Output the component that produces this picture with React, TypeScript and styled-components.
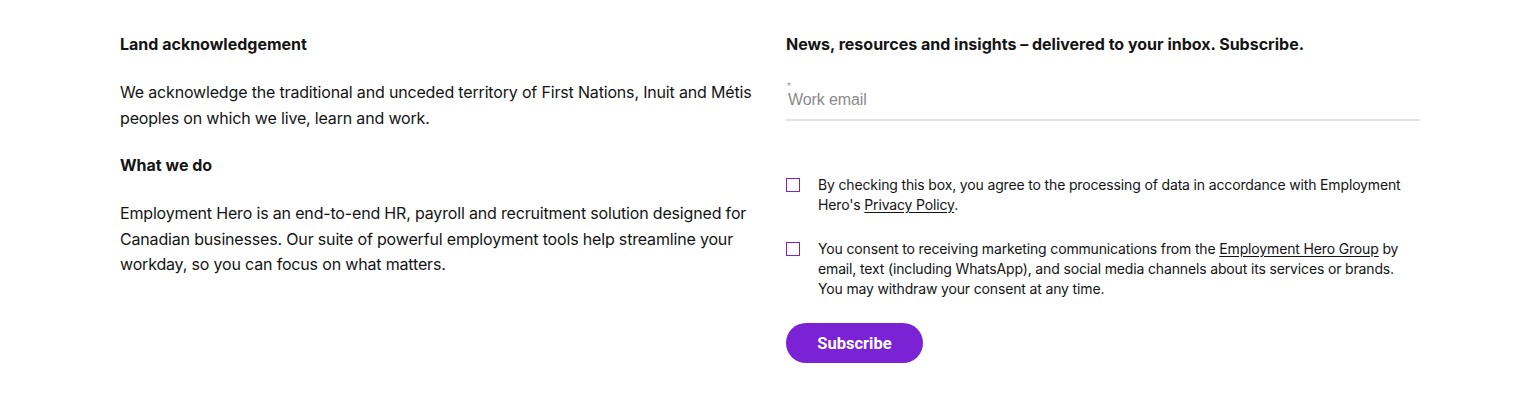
import React from 'react';
import styled, { createGlobalStyle } from 'styled-components';

const GlobalStyle = createGlobalStyle`
  body {
    margin: 0;
    background: #ffffff;
    font-family: 'Inter', 'Noto Sans', sans-serif;
    color: #141414;
  }
`;

const Footer = styled.footer`
  box-sizing: border-box;
  width: 1540px;
  height: 393px;
  padding: 34px 120px 0;
  display: grid;
  grid-template-columns: 1fr 1fr;
  column-gap: 32px;
`;

const Column = styled.div`
  display: flex;
  flex-direction: column;
`;

const Heading = styled.h4`
  margin: 0;
  font-size: 16px;
  line-height: 20px;
  font-weight: 700;
`;

const Paragraph = styled.p`
  margin: 26px 0 24px;
  font-size: 16px;
  line-height: 25.5px;
  letter-spacing: -0.17px;
`;

const EmailField = styled.label`
  position: relative;
  display: block;
  margin-top: 25px;
  border-bottom: 2px solid #e2e2e2;
  padding: 10px 0 9px 2px;
`;

const Required = styled.span`
  position: absolute;
  left: 1px;
  top: 3px;
  font-size: 10px;
  line-height: 10px;
  color: #9a9a9a;
  font-family: 'Liberation Sans', Arial, sans-serif;
`;

const EmailInput = styled.input`
  border: none;
  outline: none;
  padding: 0;
  width: 100%;
  font-family: 'Liberation Sans', Arial, sans-serif;
  font-size: 16px;
  letter-spacing: -0.1px;
  line-height: 20px;
  color: #141414;
  background: transparent;

  &::placeholder {
    color: #8a8a8a;
  }
`;

const ConsentRow = styled.label<{ $first?: boolean }>`
  display: flex;
  gap: 18px;
  margin-top: ${(p) => (p.$first ? '54px' : '24px')};
  font-size: 14px;
  line-height: 20px;
  letter-spacing: -0.15px;
  padding-right: 14px;

  a {
    color: inherit;
    text-decoration: underline;
    text-underline-offset: 2px;
  }
`;

const Box = styled.span`
  flex: 0 0 auto;
  box-sizing: border-box;
  width: 14px;
  height: 14px;
  margin-top: 3px;
  border: 1.5px solid #7b22d4;
  background: #fff;
`;

const SubscribeButton = styled.button`
  align-self: flex-start;
  margin-top: 24px;
  width: 137px;
  height: 40px;
  border: none;
  border-radius: 20px;
  background: #7b22d4;
  color: #ffffff;
  font-family: 'Roboto', 'Liberation Sans', Arial, sans-serif;
  font-weight: 700;
  font-size: 16.5px;
  cursor: pointer;
`;

const App: React.FC = () => {
  return (
    <>
      <GlobalStyle />
      <Footer>
        <Column>
          <Heading>Land acknowledgement</Heading>
          <Paragraph>
            We acknowledge the traditional and unceded territory of First Nations, Inuit and Métis
            peoples on which we live, learn and work.
          </Paragraph>
          <Heading>What we do</Heading>
          <Paragraph>
            Employment Hero is an end-to-end HR, payroll and recruitment solution designed for
            Canadian businesses. Our suite of powerful employment tools help streamline your
            workday, so you can focus on what matters.
          </Paragraph>
        </Column>
        <Column>
          <Heading>News, resources and insights – delivered to your inbox. Subscribe.</Heading>
          <EmailField>
            <Required>*</Required>
            <EmailInput type="email" placeholder="Work email" />
          </EmailField>
          <ConsentRow $first>
            <Box />
            <span>
              By checking this box, you agree to the processing of data in accordance with
              Employment Hero's <a href="#privacy">Privacy Policy</a>.
            </span>
          </ConsentRow>
          <ConsentRow>
            <Box />
            <span>
              You consent to receiving marketing communications from the{' '}
              <a href="#group">Employment Hero Group</a> by email, text (including WhatsApp), and
              social media channels about its services or brands. You may withdraw your consent at
              any time.
            </span>
          </ConsentRow>
          <SubscribeButton type="button">Subscribe</SubscribeButton>
        </Column>
      </Footer>
    </>
  );
};

export default App;
